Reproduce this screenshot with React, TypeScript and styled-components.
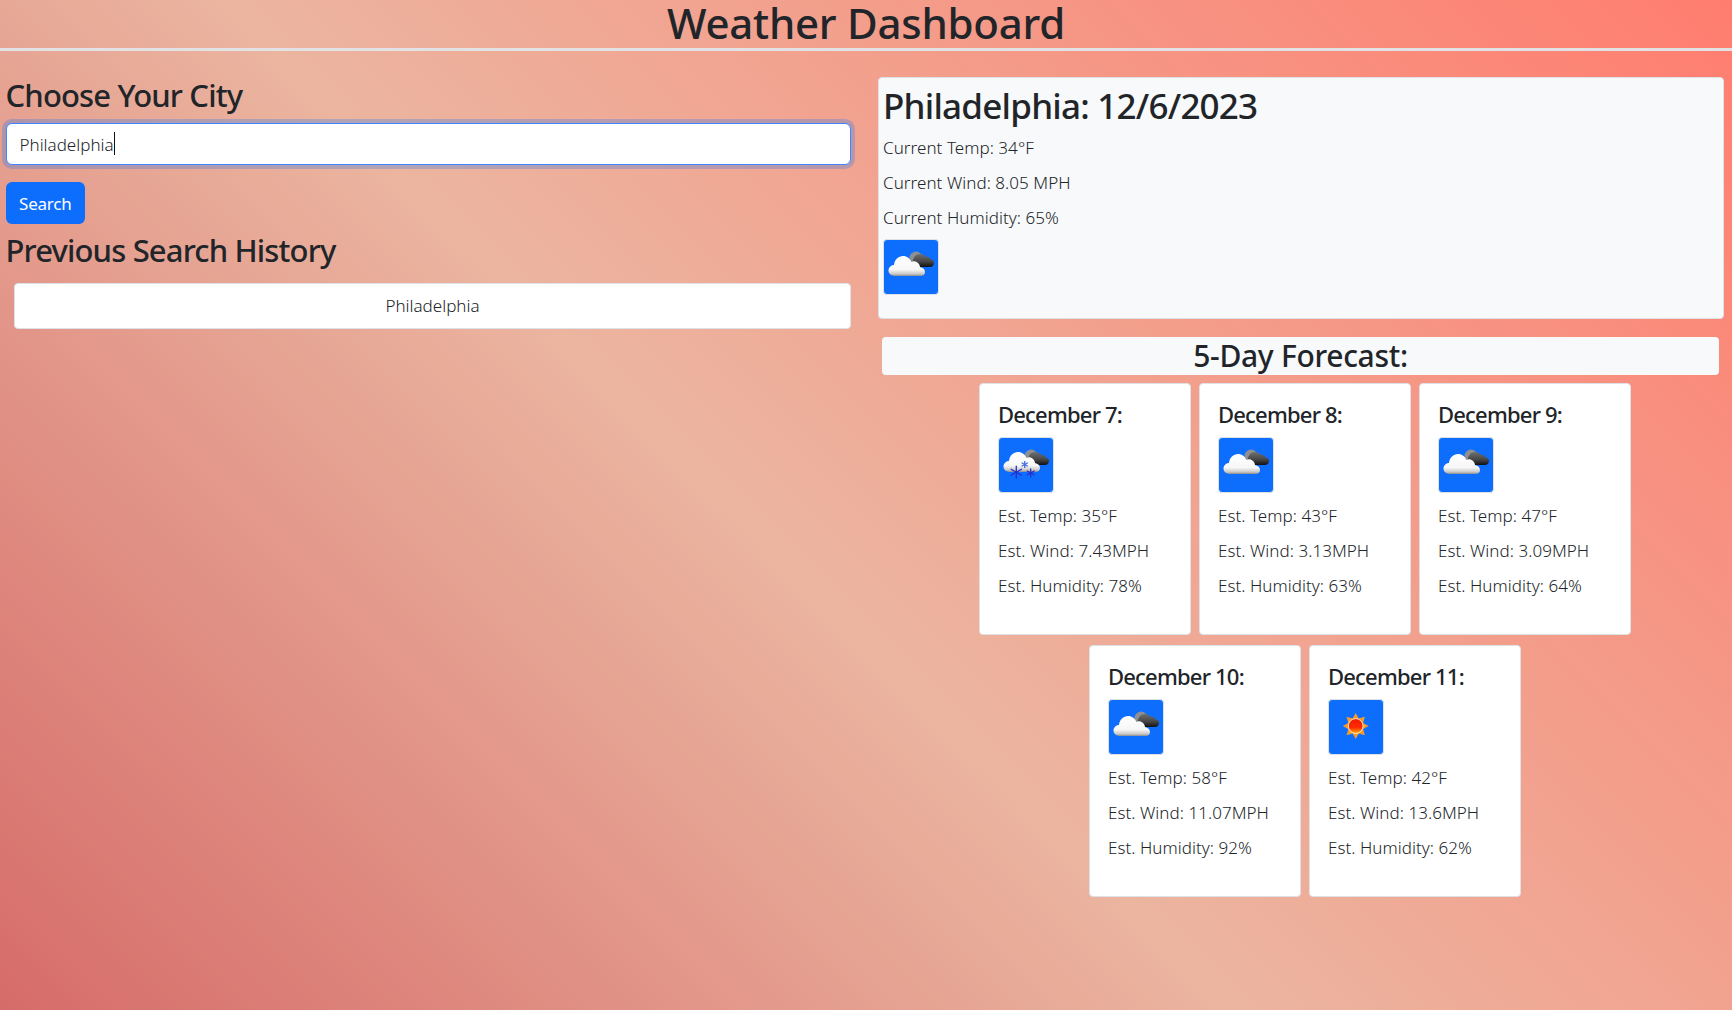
import React from 'react'
import styled, { createGlobalStyle } from 'styled-components'

const GlobalStyle = createGlobalStyle`
    html, body {
        margin: 0;
        padding: 0;
    }

    body {
        font-family: 'Noto Sans', 'Open Sans', sans-serif;
        color: #212529;
    }

    * {
        box-sizing: border-box;
    }
`

const Page = styled.div`
    width: 100%;
    height: 1010px;
    overflow: hidden;
    background: linear-gradient(45deg, #d66c69 0%, #ebb5a0 45%, #ff7d6f 100%);
`

const Title = styled.h1`
    margin: 0;
    height: 48px;
    font-size: 42px;
    line-height: 46px;
    font-weight: 500;
    text-align: center;
    letter-spacing: -0.25px;
`

const Rule = styled.hr`
    margin: 0;
    border: 0;
    height: 3px;
    background: #e2e2e4;
`

const Columns = styled.main`
    display: grid;
    grid-template-columns: 866px 866px;
`

const LeftColumn = styled.section`
    padding: 25px 15px 0 5.5px;
`

const RightColumn = styled.section`
    padding: 26px 8px 0 12px;
`

const Heading = styled.h2`
    margin: 0 0 9px;
    font-size: 31px;
    line-height: 38px;
    font-weight: 500;
    letter-spacing: -0.85px;
`

const InputWrap = styled.div`
    position: relative;
    margin-bottom: 17px;
`

const CityInput = styled.input`
    display: block;
    width: 100%;
    height: 42px;
    padding: 6px 13px;
    font: inherit;
    font-size: 17px;
    font-weight: 300;
    letter-spacing: 0;
    color: #212529;
    background: #fff;
    border: 1px solid #3d86fd;
    border-radius: 6px;
    outline: 0;
    box-shadow: 0 0 0 4px rgba(13, 110, 253, 0.25);
`

const Caret = styled.span`
    position: absolute;
    left: 108px;
    top: 9px;
    width: 1px;
    height: 23px;
    background: #111;
`

const SearchButton = styled.button`
    display: block;
    height: 42px;
    padding: 0 13.5px;
    margin-bottom: 7px;
    font: inherit;
    font-size: 17px;
    letter-spacing: -0.2px;
    color: #fff;
    background: #0d6efd;
    border: 0;
    border-radius: 6px;
`

const HistoryList = styled.div`
    padding: 5px 0 0 8.5px;
`

const HistoryItem = styled.button`
    display: block;
    width: 100%;
    height: 46px;
    padding: 0 0 2px;
    font: inherit;
    font-size: 17px;
    font-weight: 300;
    letter-spacing: 0;
    color: #212529;
    background: #fff;
    border: 1px solid #dee2e6;
    border-radius: 4px;
`

const CurrentPanel = styled.div`
    height: 242px;
    margin-bottom: 18px;
    padding: 7px 4px;
    background: #f8f9fa;
    border: 1px solid #dee2e6;
    border-radius: 4px;
`

const CityDate = styled.h2`
    margin: 0 0 9px;
    font-size: 35px;
    line-height: 42px;
    font-weight: 500;
    letter-spacing: -0.78px;
`

const StatList = styled.div<{ $after: number }>`
    display: flex;
    flex-direction: column;
    gap: 11px;
    margin-bottom: ${(props) => props.$after}px;
`

const Stat = styled.p`
    margin: 0;
    font-size: 17px;
    line-height: 24px;
    font-weight: 300;
    letter-spacing: 0.05px;
`

const IconBox = styled.div`
    width: 56px;
    height: 56px;
    background: #0d6efd;
    border: 1px solid #dee2e6;
    border-radius: 4px;
    overflow: hidden;
    line-height: 0;
`

const ForecastHeading = styled.h3`
    height: 38px;
    margin: 0 5px 8px 4px;
    font-size: 30px;
    line-height: 38px;
    font-weight: 500;
    text-align: center;
    letter-spacing: -0.3px;
    background: #f8f9fa;
    border-radius: 4px;
`

const CardGrid = styled.div`
    display: flex;
    flex-wrap: wrap;
    justify-content: center;
    gap: 10px 8.5px;
    padding-left: 7.5px;
`

const Card = styled.article`
    width: 211.5px;
    height: 252px;
    padding: 17px 18px;
    background: #fff;
    border: 1px solid #dee2e6;
    border-radius: 4px;
`

const CardTitle = styled.h5`
    margin: 0 0 10px;
    font-size: 22px;
    line-height: 26px;
    font-weight: 500;
    letter-spacing: -0.8px;
`

const CardStats = styled(StatList)`
    padding-top: 11px;
`

type IconKind = 'clouds' | 'snow' | 'sun'

const WhiteCloud = ({ lift = 0 }: { lift?: number }) => (
    <path
        fill="url(#whiteCloud)"
        transform={`translate(0 ${-lift})`}
        d="M12 37C8 37 5.5 34.5 5.5 31.5C5.5 28.5 8 26 11 26C11.5 20.5 15.5 17 20 17C24 17 27 19.5 28.5 23C30 22 33 22 35 24C36.5 25.5 37 27 37 28C40 28.5 42 30.5 42 33C42 35.5 40 37 38 37Z"
    />
)

const DarkCloud = () => (
    <>
        <circle cx="33" cy="19" r="6.5" fill="#8d8f93" />
        <path
            fill="url(#darkCloud)"
            d="M30 25C29 20 32 15 37 15C40 15 42 16.5 43 18C45 17.5 47 18.5 47.5 20.5C50 20.5 51 22 51 24C51 26.5 49 28 47 28L34 28Z"
        />
    </>
)

const Flake = ({ x, y, r, color }: { x: number; y: number; r: number; color: string }) => (
    <g stroke={color} strokeWidth="1.3">
        {[90, 30, 150].map((a) => {
            const dx = Math.cos((a * Math.PI) / 180) * r
            const dy = Math.sin((a * Math.PI) / 180) * r
            return <line key={a} x1={x - dx} y1={y - dy} x2={x + dx} y2={y + dy} />
        })}
    </g>
)

const sunRays = Array.from({ length: 16 }, (_, i) => {
    const a = (i * Math.PI) / 8
    const r = i % 2 === 0 ? 13 : 8
    return `${27.7 + Math.cos(a) * r},${27 + Math.sin(a) * r}`
}).join(' ')

const WeatherIcon = ({ kind }: { kind: IconKind }) => (
    <svg width="54" height="54" viewBox="1 1 54 54">
        <defs>
            <linearGradient id="whiteCloud" x1="0" y1="0" x2="0" y2="1">
                <stop offset="0" stopColor="#ffffff" />
                <stop offset="0.68" stopColor="#f7f7f7" />
                <stop offset="0.9" stopColor="#c8c8c8" />
                <stop offset="1" stopColor="#8a8a8a" />
            </linearGradient>
            <linearGradient id="darkCloud" x1="0" y1="0" x2="0" y2="1">
                <stop offset="0" stopColor="#6f6f6f" />
                <stop offset="0.6" stopColor="#444" />
                <stop offset="1" stopColor="#111" />
            </linearGradient>
            <linearGradient id="sunCore" x1="0" y1="0" x2="0" y2="1">
                <stop offset="0" stopColor="#f01a00" />
                <stop offset="0.6" stopColor="#ff2a00" />
                <stop offset="1" stopColor="#ffb000" />
            </linearGradient>
        </defs>
        {kind === 'sun' && (
            <>
                <polygon points={sunRays} fill="#f49b2c" />
                <circle cx="27.7" cy="27" r="7.4" fill="url(#sunCore)" stroke="#ffe9c9" strokeWidth="1" />
            </>
        )}
        {kind !== 'sun' && <DarkCloud />}
        {kind === 'clouds' && <WhiteCloud />}
        {kind === 'snow' && (
            <>
                <WhiteCloud lift={2} />
                <Flake x={18.3} y={35.3} r={6.5} color="#2a2fc8" />
                <Flake x={32.7} y={36} r={4.5} color="#2a2fc8" />
                <Flake x={26.7} y={27.5} r={3.6} color="#4a6be0" />
            </>
        )}
    </svg>
)

const forecast: { date: string; icon: IconKind; temp: number; wind: string; humidity: number }[] = [
    { date: 'December 7:', icon: 'snow', temp: 35, wind: '7.43', humidity: 78 },
    { date: 'December 8:', icon: 'clouds', temp: 43, wind: '3.13', humidity: 63 },
    { date: 'December 9:', icon: 'clouds', temp: 47, wind: '3.09', humidity: 64 },
    { date: 'December 10:', icon: 'clouds', temp: 58, wind: '11.07', humidity: 92 },
    { date: 'December 11:', icon: 'sun', temp: 42, wind: '13.6', humidity: 62 },
]

const App: React.FC = () => (
    <Page>
        <GlobalStyle />
        <Title>Weather Dashboard</Title>
        <Rule />
        <Columns>
            <LeftColumn>
                <Heading>Choose Your City</Heading>
                <InputWrap>
                    <CityInput defaultValue="Philadelphia" />
                    <Caret />
                </InputWrap>
                <SearchButton>Search</SearchButton>
                <Heading>Previous Search History</Heading>
                <HistoryList>
                    <HistoryItem>Philadelphia</HistoryItem>
                </HistoryList>
            </LeftColumn>
            <RightColumn>
                <CurrentPanel>
                    <CityDate>Philadelphia: 12/6/2023</CityDate>
                    <StatList $after={9}>
                        <Stat>Current Temp: 34°F</Stat>
                        <Stat>Current Wind: 8.05 MPH</Stat>
                        <Stat>Current Humidity: 65%</Stat>
                    </StatList>
                    <IconBox>
                        <WeatherIcon kind="clouds" />
                    </IconBox>
                </CurrentPanel>
                <ForecastHeading>5-Day Forecast:</ForecastHeading>
                <CardGrid>
                    {forecast.map((day) => (
                        <Card key={day.date}>
                            <CardTitle>{day.date}</CardTitle>
                            <IconBox>
                                <WeatherIcon kind={day.icon} />
                            </IconBox>
                            <CardStats $after={0}>
                                <Stat>Est. Temp: {day.temp}°F</Stat>
                                <Stat>Est. Wind: {day.wind}MPH</Stat>
                                <Stat>Est. Humidity: {day.humidity}%</Stat>
                            </CardStats>
                        </Card>
                    ))}
                </CardGrid>
            </RightColumn>
        </Columns>
    </Page>
)

export default App
